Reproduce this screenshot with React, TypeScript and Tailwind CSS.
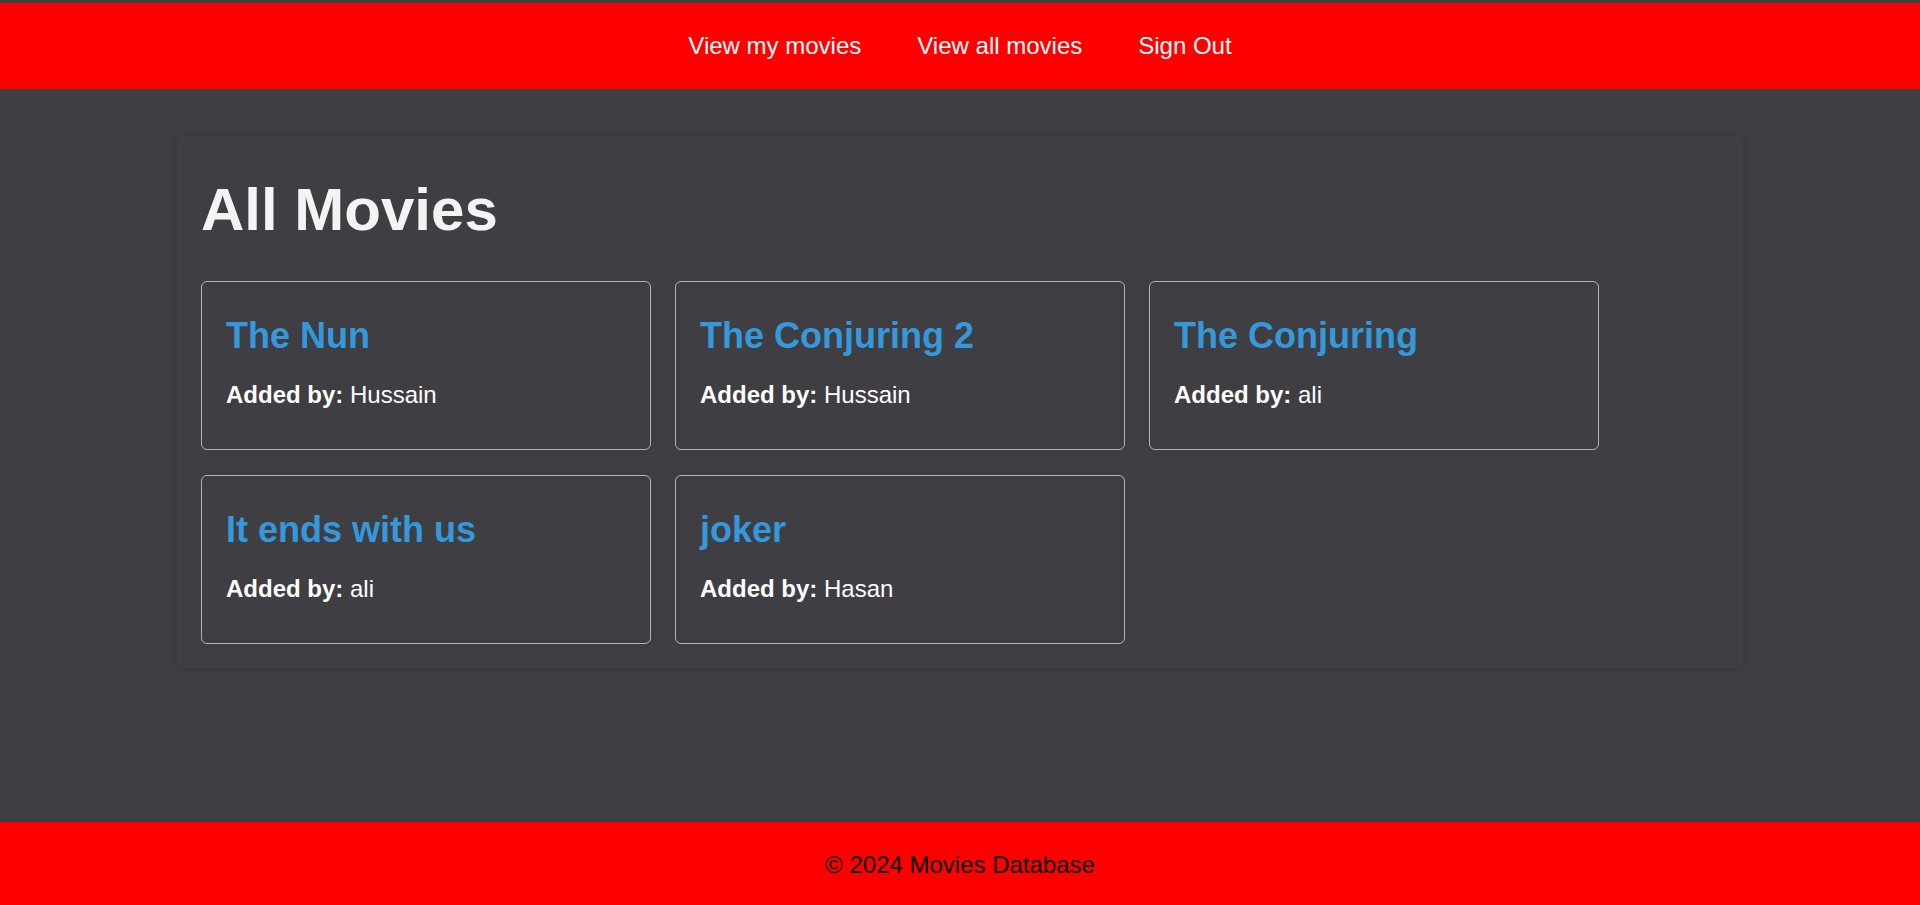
import React from "react";

const movies = [
  { title: "The Nun", addedBy: "Hussain" },
  { title: "The Conjuring 2", addedBy: "Hussain" },
  { title: "The Conjuring", addedBy: "ali" },
  { title: "It ends with us", addedBy: "ali" },
  { title: "joker", addedBy: "Hasan" },
];

function MovieCard({ title, addedBy }: { title: string; addedBy: string }) {
  return (
    <div className="w-[450px] h-[169px] rounded-[6px] border border-[#b4b4b8] px-6 pt-[34px] pb-[38px]">
      <h2 className="text-[36px] leading-[40px] font-bold text-[#3498db] mb-[23px]">{title}</h2>
      <p className="text-[24px] leading-[32px] text-white">
        <span className="font-bold">Added by:</span> {addedBy}
      </p>
    </div>
  );
}

export default function App() {
  return (
    <div
      className="min-h-screen flex flex-col bg-[#3f3e43]"
      style={{ fontFamily: '"Liberation Sans", Arial, sans-serif' }}
    >
      <div className="h-[3px] bg-[#3b4242]" />
      <nav className="h-[86px] bg-[#ff0000] flex items-center justify-center gap-14 text-[24px] text-white">
        <a href="#">View my movies</a>
        <a href="#">View all movies</a>
        <a href="#">Sign Out</a>
      </nav>

      <main className="flex-1 pt-[47px]">
        <div className="w-[1566px] mx-auto rounded-[6px] shadow-[0_0_10px_rgba(0,0,0,0.15)] px-6 pt-[44px] pb-6">
          <h1 className="text-[60px] leading-[60px] font-bold text-[#f4f4f4] mb-[41px]">All Movies</h1>
          <div className="flex flex-wrap gap-x-6 gap-y-[25px]">
            {movies.map((m) => (
              <MovieCard key={m.title} title={m.title} addedBy={m.addedBy} />
            ))}
          </div>
        </div>
      </main>

      <footer className="h-[83px] bg-[#ff0000] flex items-center justify-center pt-[3px] text-[24px] text-black">
        © 2024 Movies Database
      </footer>
    </div>
  );
}
